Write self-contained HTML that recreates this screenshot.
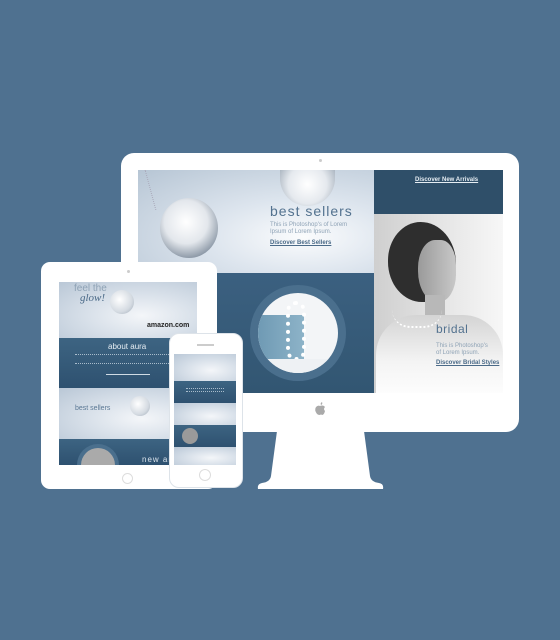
<!DOCTYPE html>
<html><head><meta charset="utf-8"><style>
*{margin:0;padding:0;box-sizing:border-box}
body{width:560px;height:640px;background:#4f7190;position:relative;overflow:hidden;font-family:"Liberation Sans",sans-serif}
.a{position:absolute}
.w{background:#fff}
.img{background:radial-gradient(ellipse at 60% 60%,#f4f6f9 0%,#d9e1ea 45%,#b9c7d6 100%)}
.blue{background:linear-gradient(#3d6482,#2e5170)}
u{text-decoration:underline}
</style></head><body>
<!-- monitor -->
<div class="a w" style="left:121px;top:153px;width:398px;height:279px;border-radius:13px"></div>
<div class="a" style="left:319px;top:159px;width:3px;height:3px;border-radius:50%;background:#ccc"></div>
<svg class="a" style="left:257px;top:431px" width="127" height="58"><path d="M20 0 H107 L113 45 Q114 51 122 52 Q127 53 126 58 H1 Q0 53 5 52 Q13 51 14 45 Z" fill="#fff"/></svg>
<!-- monitor screen -->
<div class="a img" style="left:138px;top:170px;width:236px;height:103px;background:radial-gradient(ellipse at 70% 65%,#fbfcfd 0%,#dde5ee 40%,#b6c5d4 100%)"></div>
<div class="a" style="left:150px;top:170px;width:40px;height:40px;border-left:1px dotted #aab;transform:skewX(15deg)"></div>
<div class="a" style="left:160px;top:198px;width:58px;height:60px;border-radius:50%;background:radial-gradient(circle at 45% 40%,#fff 0%,#e3e7ec 45%,#8e9aa8 75%,#c7ced6)"></div>
<div class="a" style="left:280px;top:170px;width:55px;height:36px;border-radius:0 0 28px 28px;background:radial-gradient(circle at 50% 40%,#fff,#e5e9ee 55%,#9aa6b3)"></div>
<div class="a" style="left:270px;top:203px;font-size:14px;color:#53728f;letter-spacing:1px">best sellers</div>
<div class="a" style="left:270px;top:222px;font-size:6px;line-height:7px;color:#8fa3b6">This is Photoshop's of Lorem<br>Ipsum of Lorem Ipsum.</div>
<div class="a" style="left:270px;top:240px;font-size:6px;font-weight:bold;color:#4a6a88"><u>Discover Best Sellers</u></div>
<div class="a blue" style="left:138px;top:273px;width:236px;height:120px;background:linear-gradient(#3b6080,#325672)"></div>
<div class="a" style="left:250px;top:285px;width:96px;height:96px;border-radius:50%;background:#4a6f8d"></div>
<div class="a" style="left:258px;top:293px;width:80px;height:80px;border-radius:50%;overflow:hidden;background:#f3f5f7">
 <div class="a" style="left:0;top:22px;width:46px;height:48px;background:linear-gradient(90deg,#6f9ab4,#8db3c8)"></div>
 <div class="a" style="left:28px;top:8px;width:20px;height:60px;border:4px dotted #fff;border-radius:10px"></div>
 <div class="a" style="left:0;top:66px;width:80px;height:14px;background:#eef1f4"></div>
</div>
<div class="a" style="left:374px;top:170px;width:129px;height:44px;background:#2f4f69"></div>
<div class="a" style="left:415px;top:177px;font-size:6px;font-weight:bold;color:#e6edf3"><u>Discover New Arrivals</u></div>
<div class="a" style="left:374px;top:214px;width:129px;height:179px;background:linear-gradient(90deg,#cfcfcf,#e6e6e6 55%,#f7f7f7)"></div>
<div class="a" style="left:388px;top:222px;width:68px;height:80px;border-radius:48% 52% 40% 50%;background:#2e2e2e"></div>
<div class="a" style="left:418px;top:240px;width:38px;height:62px;border-radius:45% 40% 45% 50%;background:linear-gradient(90deg,#9a9a9a,#c8c8c8)"></div>
<div class="a" style="left:425px;top:295px;width:20px;height:30px;background:#b8b8b8"></div>
<div class="a" style="left:376px;top:315px;width:127px;height:78px;border-radius:40px 40px 0 0;background:linear-gradient(#d4d4d4,#f4f4f4 60%,#fdfdfd)"></div>
<div class="a" style="left:392px;top:310px;width:50px;height:18px;border-bottom:2px dotted #fff;border-radius:0 0 25px 25px"></div>
<div class="a" style="left:436px;top:322px;font-size:12px;color:#53728f;letter-spacing:.5px">bridal</div>
<div class="a" style="left:436px;top:343px;font-size:6px;line-height:7px;color:#8fa3b6">This is Photoshop's<br>of Lorem Ipsum.</div>
<div class="a" style="left:436px;top:360px;font-size:6px;font-weight:bold;color:#4a6a88"><u>Discover Bridal Styles</u></div>
<svg class="a" style="left:313px;top:401px" width="14" height="16"><path d="M9 1 Q10 3 8 4 Q7 2 9 1Z M7 5 Q9 4 11 5 Q12 6 12 6 Q10 8 12 10 Q11 14 9 14 Q8 13 7 14 Q5 14 4 13 Q1 9 3 6 Q5 4 7 5Z" fill="#aaa"/></svg>
<!-- tablet -->
<div class="a w" style="left:41px;top:262px;width:176px;height:227px;border-radius:9px"></div>
<div class="a" style="left:127px;top:270px;width:3px;height:3px;border-radius:50%;background:#ccc"></div>
<div class="a" style="left:122px;top:473px;width:11px;height:11px;border-radius:50%;border:1px solid #ddd"></div>
<div class="a img" style="left:59px;top:282px;width:138px;height:56px"></div>
<div class="a" style="left:110px;top:290px;width:24px;height:24px;border-radius:50%;background:radial-gradient(circle at 40% 40%,#fff,#d5dbe2 60%,#9aa6b3)"></div>
<div class="a" style="left:74px;top:283px;font-size:10px;color:#8ea2b5">feel the</div>
<div class="a" style="left:80px;top:292px;font-size:11px;font-style:italic;color:#4b6a88;font-family:'Liberation Serif',serif">glow!</div>
<div class="a" style="left:147px;top:322px;font-size:7px;font-weight:bold;color:#222">amazon.com</div>
<div class="a blue" style="left:59px;top:338px;width:138px;height:50px"></div>
<div class="a" style="left:108px;top:342px;font-size:8px;color:#e6edf3">about aura</div>
<div class="a" style="left:75px;top:354px;width:108px;height:10px;border-top:1px dotted #a9bccc;border-bottom:1px dotted #a9bccc"></div>
<div class="a" style="left:106px;top:374px;width:44px;height:1px;background:#cfdbe5"></div>
<div class="a img" style="left:59px;top:388px;width:138px;height:51px"></div>
<div class="a" style="left:130px;top:396px;width:20px;height:20px;border-radius:50%;background:radial-gradient(circle at 40% 40%,#fff,#d5dbe2 60%,#9aa6b3)"></div>
<div class="a" style="left:75px;top:405px;font-size:7px;color:#5b7894">best sellers</div>
<div class="a blue" style="left:59px;top:439px;width:138px;height:26px"></div>
<div class="a" style="left:77px;top:444px;width:42px;height:42px;border-radius:50%;background:#4a6f8d;clip-path:inset(0 0 21px 0)"></div>
<div class="a" style="left:81px;top:448px;width:34px;height:34px;border-radius:50%;background:#aaa;clip-path:inset(0 0 17px 0)"></div>
<div class="a" style="left:142px;top:455px;font-size:8px;color:#d9e3ec;letter-spacing:1px">new arr</div>
<!-- phone -->
<div class="a w" style="left:169px;top:333px;width:74px;height:155px;border-radius:10px;border:1px solid #dde3e9"></div>
<div class="a" style="left:197px;top:344px;width:17px;height:2px;background:#ccc"></div>
<div class="a" style="left:199px;top:469px;width:12px;height:12px;border-radius:50%;border:1px solid #ddd"></div>
<div class="a img" style="left:174px;top:354px;width:62px;height:27px"></div>
<div class="a blue" style="left:174px;top:381px;width:62px;height:22px"></div>
<div class="a" style="left:186px;top:388px;width:38px;height:4px;border-top:1px dotted #a9bccc;border-bottom:1px dotted #a9bccc"></div>
<div class="a img" style="left:174px;top:403px;width:62px;height:22px"></div>
<div class="a blue" style="left:174px;top:425px;width:62px;height:22px"></div>
<div class="a" style="left:182px;top:428px;width:16px;height:16px;border-radius:50%;background:#9a9a9a"></div>
<div class="a img" style="left:174px;top:447px;width:62px;height:18px"></div>
</body></html>
